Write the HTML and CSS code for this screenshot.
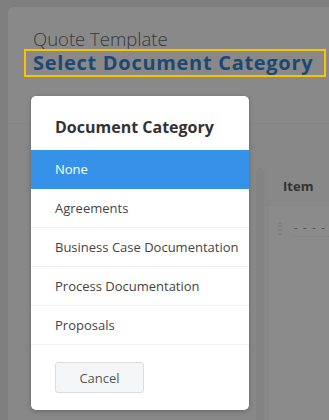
FILE: index.html
```html
<!DOCTYPE html>
<html lang="en">
<head>
    <meta charset="UTF-8">
    <meta name="viewport" content="width=device-width, initial-scale=1.0">
    <title>Select Document Category</title>
    <link rel="stylesheet" href="styles.css">
</head>
<body>
    <div class="page">
        <div class="page-head">
            <div class="crumb">Quote Template</div>
            <h1 class="page-title"><span class="highlight">Select Document Category</span></h1>
        </div>
        <div class="page-body">
            <div class="side"></div>
            <div class="rail"></div>
            <div class="items">
                <div class="items-head">Item</div>
                <div class="items-row">
                    <span class="grip"></span>
                    <span class="dashes">- - - - -</span>
                </div>
            </div>
        </div>
    </div>

    <div class="modal">
        <h2 class="modal-title">Document Category</h2>
        <ul class="options">
            <li class="option selected">None</li>
            <li class="option">Agreements</li>
            <li class="option">Business Case Documentation</li>
            <li class="option">Process Documentation</li>
            <li class="option">Proposals</li>
        </ul>
        <div class="modal-foot">
            <button class="btn">Cancel</button>
        </div>
    </div>
</body>
</html>
```

FILE: styles.css
```css
html, body { margin: 0; height: 100%; }
body { background: #7f7f7f; font-family: "Open Sans", Arial, sans-serif; overflow: hidden; }

/* dimmed page behind the dialog */
.page { margin: 7px 0 0 8px; height: calc(100% - 7px); background: #898989; border-radius: 6px 0 0 0; display: flex; flex-direction: column; }
.page-head { padding: 22px 0 0 16px; height: 116px; box-sizing: border-box; flex: none; }
.crumb { font-size: 18.5px; font-weight: 300; color: #383838; line-height: 20px; padding-left: 9px; }
.page-title { margin: 0; font-size: 20px; font-weight: 700; line-height: 24px; letter-spacing: 0.7px; color: #1d4874; }
.highlight { display: inline-block; border: 2px solid #f6c500; padding: 0 11px 0 7px; }
.page-body { flex: 1; display: flex; align-items: stretch; padding-top: 44px; background: #878787; border-top: 1px solid #848484; overflow: hidden; }
.side { width: 248px; flex: none; }
.rail { width: 8px; flex: none; background: #838383; border-radius: 4px 4px 0 0; }
.items { flex: 1; margin-left: 5px; background: #8b8b8b; border-radius: 4px 0 0 0; overflow: hidden; }
.items-head { height: 37px; line-height: 37px; padding-left: 14px; font-size: 13px; font-weight: 700; color: #333; background: #888888; border-radius: 4px 0 0 0; border-bottom: 1px solid #858585; }
.items-row { display: flex; align-items: center; height: 44px; padding-left: 9px; gap: 12px; }
.grip { width: 4px; height: 13px; flex: none; border-left: 2px dotted #7f7f7f; border-right: 2px dotted #7f7f7f; box-sizing: border-box; }
.dashes { font-size: 12px; color: #555; letter-spacing: 1px; border-bottom: 1px dotted #7c7c7c; white-space: nowrap; }

/* dialog */
.modal { position: absolute; left: 31px; top: 96px; width: 218px; background: #fff; border-radius: 5px; box-shadow: 0 1px 4px rgba(0,0,0,0.25); overflow: hidden; }
.modal-title { margin: 0; padding: 19px 24px 11px; font-size: 16px; line-height: 24px; font-weight: 700; color: #333; }
.options { list-style: none; margin: 0; padding: 0; }
.option { height: 38px; line-height: 38px; padding: 0 24px; font-size: 13px; color: #444; border-bottom: 1px solid #f1f1f1; white-space: nowrap; }
.option.selected { background: #3592e8; color: #fff; border-bottom-color: #3592e8; }
.modal-foot { padding: 17px 24px; }
.btn { width: 89px; height: 31px; font-family: inherit; font-size: 13px; color: #555; background: #f5f6f8; border: 1px solid #dcdcdc; border-radius: 3px; }
```
